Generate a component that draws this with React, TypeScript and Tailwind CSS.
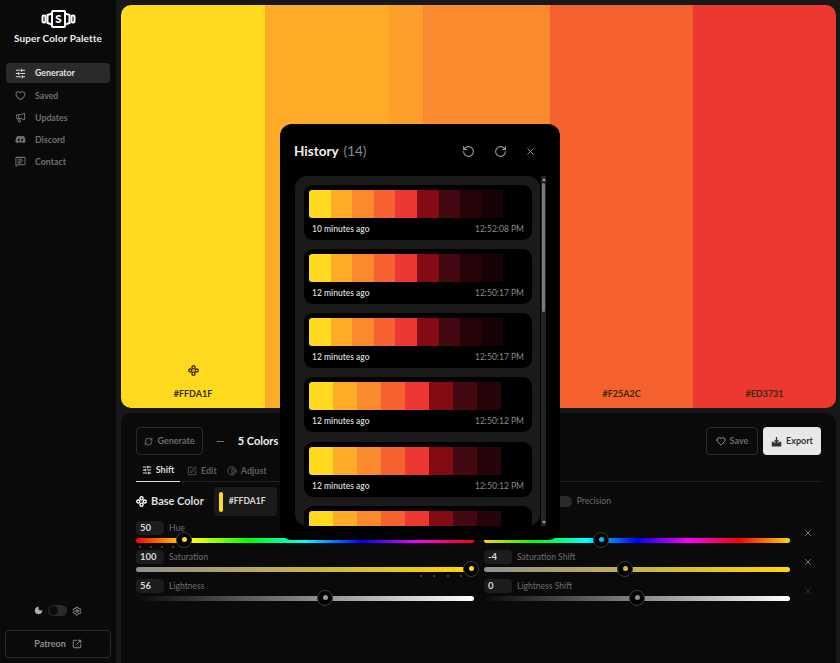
import { useState } from "react";
import {
  SlidersHorizontal,
  Heart,
  Megaphone,
  MessageSquareText,
  Settings,
  Moon,
  SquareArrowOutUpRight,
  RefreshCw,
  RotateCcw,
  RotateCw,
  X,
  SquarePen,
  Contrast,
} from "lucide-react";
import { FaDiscord } from "react-icons/fa";

const swatches = ["#FFDA1F", "#FFAB27", "#FB8A2E", "#F6622F", "#ED3731"];
const darkTen = ["#830C14", "#430810", "#250509", "#150305", "#000000"];
const darkNine = ["#830C14", "#430810", "#250509", "#000000"];

const history = [
  { ago: "10 minutes ago", time: "12:52:08 PM", tail: darkTen, w: "w-[21.6px]" },
  { ago: "12 minutes ago", time: "12:50:17 PM", tail: darkTen, w: "w-[21.6px]" },
  { ago: "12 minutes ago", time: "12:50:17 PM", tail: darkTen, w: "w-[21.6px]" },
  { ago: "12 minutes ago", time: "12:50:12 PM", tail: darkNine, w: "w-[24px]" },
  { ago: "12 minutes ago", time: "12:50:12 PM", tail: darkNine, w: "w-[24px]" },
  { ago: "", time: "", tail: darkNine, w: "w-[24px]" },
];

function Logo() {
  return (
    <svg width="35" height="18" viewBox="0 0 35 18" fill="none" stroke="white" strokeWidth="2">
      <rect x="11" y="1" width="13" height="16" rx="1" />
      <path d="M11 3.5 L6.5 5 V13 L11 14.5" />
      <path d="M24 3.5 L28.5 5 V13 L24 14.5" />
      <rect x="1.5" y="5.5" width="3" height="7" rx="1.2" />
      <rect x="30.5" y="5.5" width="3" height="7" rx="1.2" />
      <text x="17.5" y="13.2" textAnchor="middle" fontSize="11.5" fontWeight="900" fill="white" stroke="none" fontFamily="Lato, sans-serif">S</text>
    </svg>
  );
}

function BaseIcon({ size = 12, color = "white" }: { size?: number; color?: string }) {
  return (
    <svg width={size} height={size} viewBox="0 0 12 12" fill="none" stroke={color} strokeWidth="1.5">
      <circle cx="6" cy="2.5" r="1.7" />
      <circle cx="6" cy="9.5" r="1.7" />
      <circle cx="2.5" cy="6" r="1.7" />
      <circle cx="9.5" cy="6" r="1.7" />
    </svg>
  );
}

function ExportIcon() {
  return (
    <svg width="11" height="11" viewBox="0 0 12 12" fill="none" stroke="#333333" strokeWidth="1.4">
      <path d="M6 1 V6.5 M3.8 4.6 L6 6.8 L8.2 4.6" />
      <path d="M3 7 H1.5 V10.8 H10.5 V7 H9" fill="#333333" />
    </svg>
  );
}

function NavItem({ label, icon, active }: { label: string; icon: React.ReactNode; active?: boolean }) {
  return (
    <div
      className={
        active
          ? "flex h-[20px] items-center gap-[9px] rounded bg-[#2a2a2a] pl-[9px] text-[8.8px] font-bold text-[#e0e0e0]"
          : "flex h-[20px] items-center gap-[9px] rounded pl-[9px] text-[8.8px] font-bold text-[#6f6f6f]"
      }
    >
      {icon}
      <span>{label}</span>
    </div>
  );
}

function Slider({
  value,
  label,
  track,
  pos,
  thumb,
  dots,
  cross,
}: {
  value: string;
  label: string;
  track: string;
  pos: string;
  thumb: string;
  dots?: string[];
  cross?: string;
}) {
  return (
    <div className="relative h-[29px]">
      <div className="flex h-[14px] items-center gap-[4px]">
        <div className="flex h-[14px] w-[28px] items-center rounded-sm bg-[#1c1c1c] pl-[4px] text-[9.5px] font-bold text-[#d8d8d8]">
          {value}
        </div>
        <span className="ml-[1px] text-[8.6px] text-[#6e6e6e]">{label}</span>
      </div>
      <div className={`relative mt-[2.5px] h-[5.5px] rounded-full ${track}`}>
        <div className={`absolute top-[-6px] flex h-[16px] w-[16px] items-center justify-center rounded-full border border-[#3a3a3a] bg-black ${pos}`}>
          <div className={`h-[5px] w-[5px] rounded-full ${thumb}`} />
        </div>
        {dots?.map((d) => (
          <div key={d} className={`absolute top-[8px] h-[2px] w-[2px] rounded-full bg-[#4a4a4a] ${d}`} />
        ))}
      </div>
      {cross && <X size={10} className={`absolute right-[-23px] top-[7px] ${cross}`} strokeWidth={2} />}
    </div>
  );
}

export default function App() {
  const [precision, setPrecision] = useState(false);
  const [dark, setDark] = useState(true);

  return (
    <div className="flex h-[663px] w-[840px] overflow-hidden bg-[#181818] font-['Lato',_'Noto_Sans',_sans-serif] text-white">
      {/* sidebar */}
      <aside className="flex w-[116px] shrink-0 flex-col bg-[#0a0a0a] px-[6px]">
        <div className="mt-[10px] flex flex-col items-center">
          <Logo />
          <div className="mt-[3px] text-[10px] font-bold tracking-[0.1px] text-[#eeeeee]">Super Color Palette</div>
        </div>
        <nav className="mt-[17px] flex flex-col gap-[2.2px]">
          <NavItem label="Generator" active icon={<SlidersHorizontal size={11} strokeWidth={2.5} />} />
          <NavItem label="Saved" icon={<Heart size={11} strokeWidth={2.2} />} />
          <NavItem label="Updates" icon={<Megaphone size={11} strokeWidth={2.2} />} />
          <NavItem label="Discord" icon={<FaDiscord size={11} />} />
          <NavItem label="Contact" icon={<MessageSquareText size={11} strokeWidth={2.2} />} />
        </nav>
        <div className="mt-auto flex flex-col">
          <div className="flex items-center justify-center gap-[5px]">
            <Moon size={9} className="text-[#b0b0b0]" fill="#b0b0b0" />
            <button onClick={() => setDark(!dark)} className="flex h-[11px] w-[19px] items-center rounded-full bg-[#2b2b2b] pl-[1px]">
              <span className="h-[9px] w-[9px] rounded-full bg-[#0c0c0c]" />
            </button>
            <Settings size={10} className="text-[#a0a8b0]" />
          </div>
          <div className="-mx-[1px] mb-[5px] mt-[14px] flex h-[28px] items-center justify-center gap-[6px] rounded border border-[#2b2b2b] text-[9px] font-bold text-[#8c8c8c]">
            Patreon
            <SquareArrowOutUpRight size={10} strokeWidth={2.4} />
          </div>
        </div>
      </aside>

      {/* main */}
      <main className="ml-[5px] flex w-[715px] flex-col pt-[5px]">
        <section className="flex h-[403px] overflow-hidden rounded-[10px] text-[9px] font-bold text-[#3a2a08]">
          <div className="flex w-[144px] flex-col items-center justify-end bg-[#FFDA1F] pb-[9px]">
            <BaseIcon size={11} color="#3d3006" />
            <div className="mt-[12px] leading-[11px]">#FFDA1F</div>
          </div>
          <div className="w-[124px] bg-[#FFAB27]" />
          <div className="w-[34px] bg-[#FD9F2A]" />
          <div className="w-[127px] bg-[#FB8A2E]" />
          <div className="flex w-[143px] items-end justify-center bg-[#F5602F] pb-[9px] leading-[11px]">#F25A2C</div>
          <div className="flex flex-1 items-end justify-center bg-[#ED3731] pb-[9px] leading-[11px]">#ED3731</div>
        </section>

        <section className="mt-[5px] flex-1 rounded-t-[10px] bg-[#0a0a0a] px-[15px] pt-[14px]">
          <div className="flex h-[28px] items-center">
            <div className="flex h-[28px] w-[67px] items-center justify-center gap-[4px] rounded border border-[#2b2b2b] text-[9px] font-bold text-[#6c6c6c]">
              <RefreshCw size={9} strokeWidth={2.5} />
              Generate
            </div>
            <span className="ml-[13px] text-[11px] text-[#8c8c8c]">—</span>
            <span className="ml-[13px] text-[11px] font-bold text-[#eeeeee]">5 Colors</span>
            <div className="ml-auto flex h-[28px] w-[52px] items-center justify-center gap-[4px] rounded border border-[#2b2b2b] text-[9px] font-bold text-[#6c6c6c]">
              <Heart size={10} className="text-[#b0b0b0]" />
              Save
            </div>
            <div className="ml-[5px] flex h-[28px] w-[58px] items-center justify-center gap-[4px] rounded bg-[#e8e8e8] text-[9px] font-bold text-[#333333]">
              <ExportIcon />
              Export
            </div>
          </div>

          <div className="mt-[5px] flex h-[22px] items-center gap-[7px] border-b border-[#222222] text-[9px] font-bold text-[#5f5f5f]">
            <div className="flex h-[22px] w-[44px] items-center justify-center gap-[4px] border-b-[1.5px] border-[#e0e0e0] text-[#dddddd]">
              <SlidersHorizontal size={10} strokeWidth={2.5} />
              Shift
            </div>
            <div className="flex items-center gap-[4px]">
              <SquarePen size={10} />
              Edit
            </div>
            <div className="ml-[3px] flex items-center gap-[4px]">
              <Contrast size={10} />
              Adjust
            </div>
          </div>

          <div className="mt-[5px] flex h-[29px] items-center">
            <BaseIcon size={11} />
            <span className="ml-[4px] text-[11px] font-bold text-[#dddddd]">Base Color</span>
            <div className="ml-[10px] flex h-[29px] w-[63px] items-center gap-[6px] rounded bg-[#1a1a1a] pl-[5px]">
              <span className="h-[20px] w-[4px] rounded-full bg-[#FFDA1F]" />
              <span className="text-[8.6px] font-bold text-[#d8d8d8]">#FFDA1F</span>
            </div>
            <button onClick={() => setPrecision(!precision)} className="ml-[278px] h-[11px] w-[17px] rounded-full bg-[#2b2b2b]" />
            <span className="ml-[5px] text-[8.6px] text-[#6e6e6e]">Precision</span>
          </div>

          <div className="mt-[5px] grid w-[654px] grid-cols-[338px_306px] gap-x-[10px]">
            <Slider
              value="50"
              label="Hue"
              track="bg-[linear-gradient(to_right,#ff0000,#ffff00,#00ff00,#00ffff,#0000ff,#ff00ff,#ff0000)]"
              pos="left-[40px]"
              thumb="bg-[#FFDA1F]"
              dots={["left-[3px]", "left-[14px]", "left-[25px]", "left-[36px]"]}
            />
            <Slider
              value=""
              label=""
              track="bg-[linear-gradient(to_right,#ffd700,#00ff00,#00ffff,#0000ff,#ff00ff,#ff0000,#ffd700)]"
              pos="left-[109px]"
              thumb="bg-[#00bfff]"
              cross="text-[#8a8a8a]"
            />
            <Slider
              value="100"
              label="Saturation"
              track="bg-[linear-gradient(to_right,#8f8f8f,#ffd700)]"
              pos="left-[327px]"
              thumb="bg-[#FFDA1F]"
              dots={["left-[284px]", "left-[297px]", "left-[311px]", "left-[324px]"]}
            />
            <Slider
              value="-4"
              label="Saturation Shift"
              track="bg-[linear-gradient(to_right,#8f8f8f,#ffd700)]"
              pos="left-[133px]"
              thumb="bg-[#d8b92c]"
              cross="text-[#8a8a8a]"
            />
            <Slider
              value="56"
              label="Lightness"
              track="bg-[linear-gradient(to_right,#0a0a0a,#ffffff)]"
              pos="left-[181px]"
              thumb="bg-[#9a9a9a]"
            />
            <Slider
              value="0"
              label="Lightness Shift"
              track="bg-[linear-gradient(to_right,#0a0a0a,#ffffff)]"
              pos="left-[145px]"
              thumb="bg-[#8a8a8a]"
              cross="text-[#3a3a3a]"
            />
          </div>
        </section>
      </main>

      {/* history dialog */}
      <div className="fixed inset-0 flex items-center justify-center">
        <div className="flex h-[416px] w-[280px] flex-col rounded-[12px] bg-black pl-[14px]">
          <div className="flex h-[52px] shrink-0 items-center pr-[24px] pt-[4px]">
            <span className="text-[13.5px] font-bold text-[#eeeeee]">History</span>
            <span className="ml-[5px] text-[13.5px] text-[#8a8a8a]">(14)</span>
            <RotateCcw size={13} className="ml-auto text-[#9a9a9a]" />
            <RotateCw size={13} className="ml-[19px] text-[#9a9a9a]" />
            <X size={11} className="ml-[18px] text-[#9a9a9a]" />
          </div>
          <div className="ml-[1px] flex h-[350px] w-[251px] gap-[1px]">
            <div className="h-[350px] w-[245px] shrink-0 overflow-hidden rounded-[12px] bg-[#1a1a1a] pl-[9px] pt-[9px]">
              <div className="flex w-[228px] flex-col gap-[9.3px]">
                {history.map((h, i) => (
                  <div key={i} className="h-[55px] shrink-0 rounded-[9px] bg-black px-[5px] pt-[5px]">
                    <div className="flex h-[28px] overflow-hidden rounded-[3px]">
                      {[...swatches, ...h.tail].map((c, j) => (
                        <div key={j} style={{ backgroundColor: c }} className={h.w} />
                      ))}
                    </div>
                    {h.ago && (
                      <div className="mt-[5px] flex items-center justify-between px-[3px] text-[8.5px]">
                        <span className="font-semibold text-[#d8d8d8]">{h.ago}</span>
                        <span className="text-[#8a8a8a]">{h.time}</span>
                      </div>
                    )}
                  </div>
                ))}
              </div>
            </div>
            <div className="relative flex w-[5px] shrink-0 flex-col items-center bg-[#242424]">
              <div className="mt-[2px] h-0 w-0 border-x-[2px] border-b-[3px] border-x-transparent border-b-[#9a9a9a]" />
              <div className="mt-[2px] h-[129px] w-[3px] rounded-full bg-[#7a7a7a]" />
              <div className="mb-[2px] mt-auto h-0 w-0 border-x-[2px] border-t-[3px] border-x-transparent border-t-[#9a9a9a]" />
            </div>
          </div>
        </div>
      </div>
    </div>
  );
}
